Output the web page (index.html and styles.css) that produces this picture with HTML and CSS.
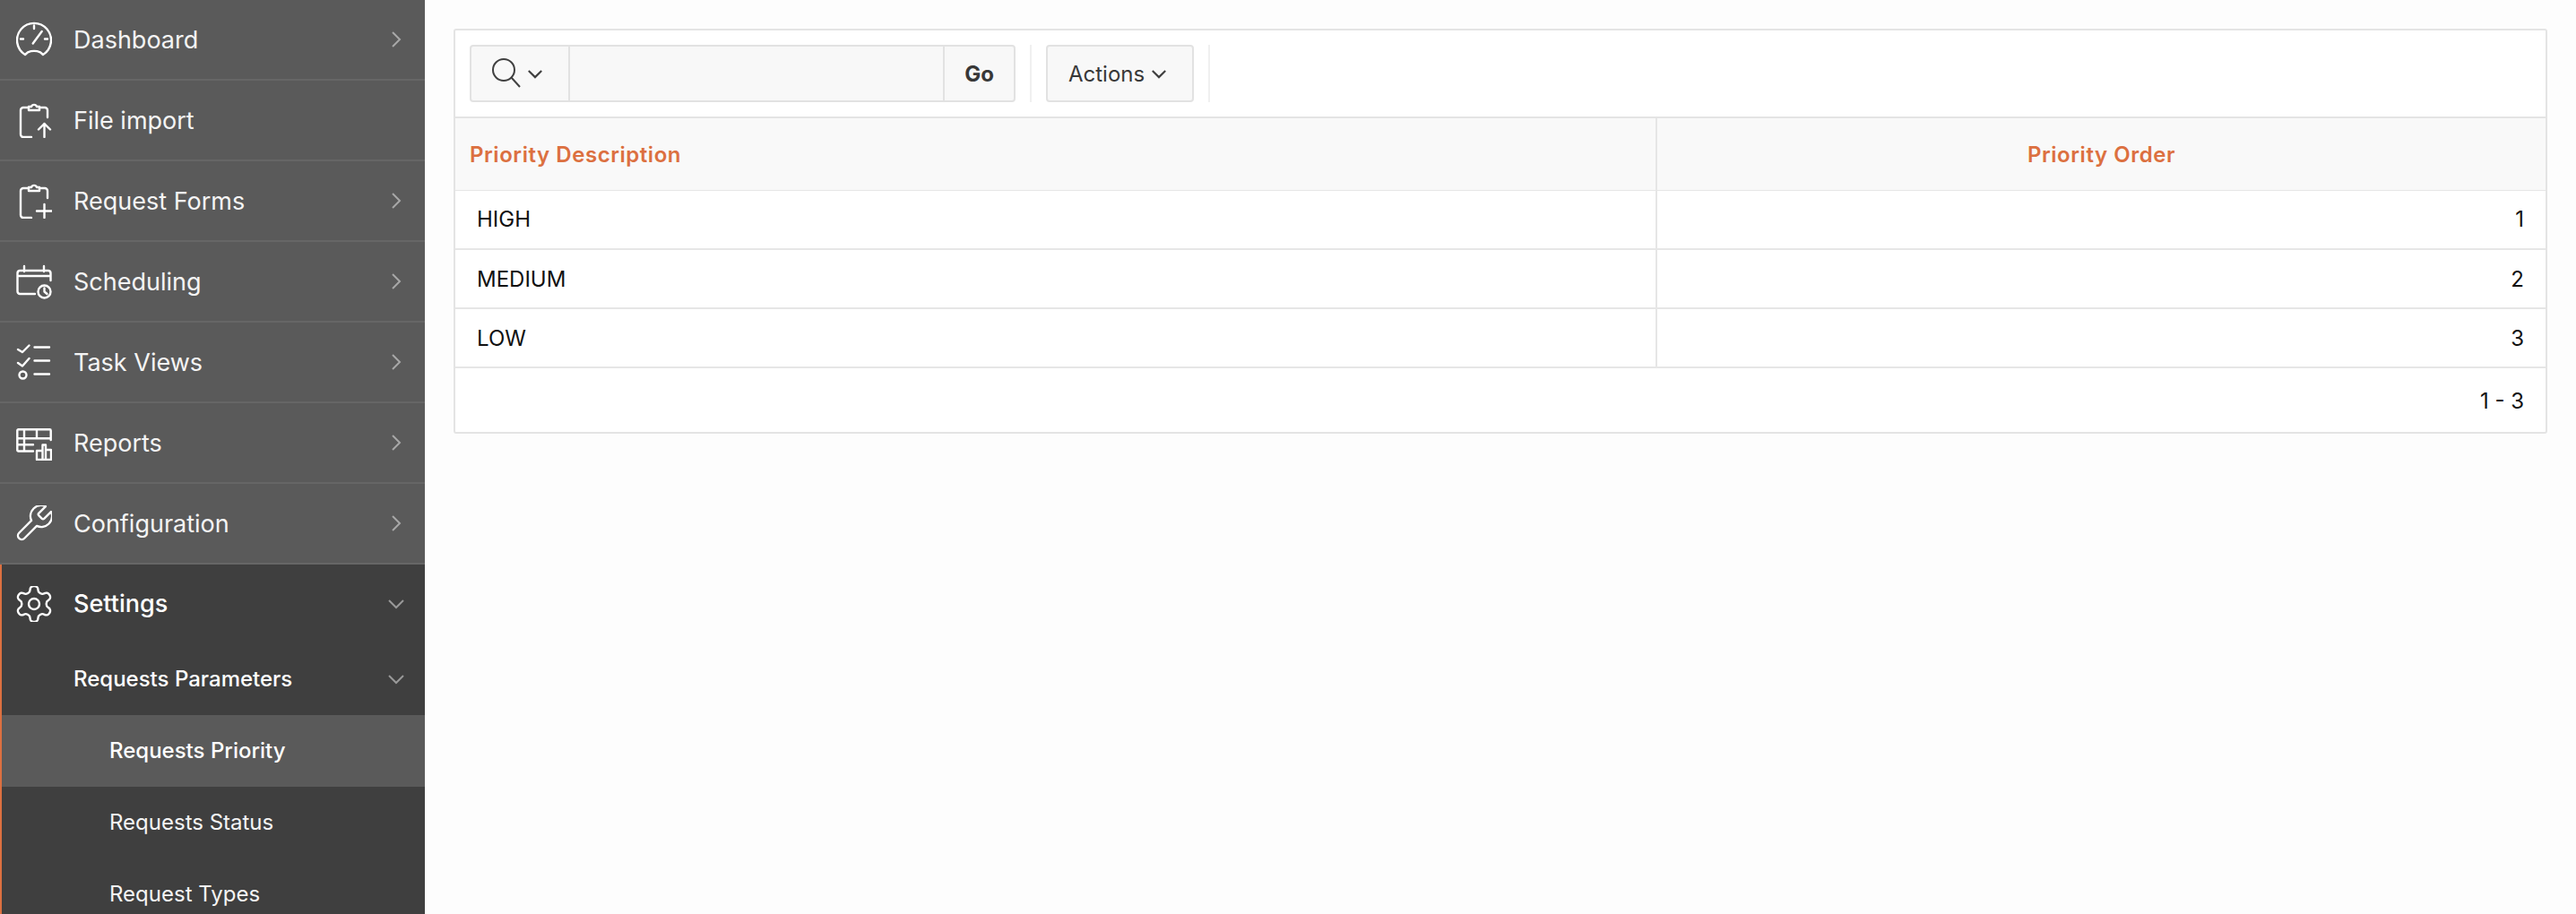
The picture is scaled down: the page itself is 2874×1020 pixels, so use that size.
FILE: index.html
```html
<!DOCTYPE html>
<html lang="en">
<head>
<meta charset="utf-8">
<title>Requests Priority</title>
<link rel="stylesheet" href="styles.css">
</head>
<body>
<div class="app">
  <nav class="side">
    <a class="item">
      <svg class="ico" viewBox="0 0 40 40"><path d="M10 37A19 19 0 1 1 30 37L27 34.3Q20 31.5 13 34.3Z"/><path d="M18.7 24.5L28.7 11M20 4.5V8M5 19.5H8M32 19.5H35"/></svg>
      <span class="label">Dashboard</span>
      <svg class="chev" viewBox="0 0 12 20"><path d="M2 2L10 10L2 18"/></svg>
    </a>
    <a class="item">
      <svg class="ico" viewBox="0 0 40 40"><path d="M13 6H8A3 3 0 0 0 5 9V36A3 3 0 0 0 8 39H17M27 6H32A3 3 0 0 1 35 9V17"/><path d="M14 9V5H17A3.2 3.2 0 0 1 23 5H26V9Z"/><path d="M31.5 39V24M25 30.5L31.5 24L38 30.5"/></svg>
      <span class="label">File import</span>
    </a>
    <a class="item">
      <svg class="ico" viewBox="0 0 40 40"><path d="M13 6H8A3 3 0 0 0 5 9V36A3 3 0 0 0 8 39H17M27 6H32A3 3 0 0 1 35 9V17"/><path d="M14 9V5H17A3.2 3.2 0 0 1 23 5H26V9Z"/><path d="M31.5 24V39M23 31.5H40"/></svg>
      <span class="label">Request Forms</span>
      <svg class="chev" viewBox="0 0 12 20"><path d="M2 2L10 10L2 18"/></svg>
    </a>
    <a class="item">
      <svg class="ico" viewBox="0 0 40 40"><path d="M21 34H4A3 3 0 0 1 1.500 31V11A3 3 0 0 1 4 8H36A3 3 0 0 1 38.500 11V19M1.500 14H38.500M9 3V9M31 3V9"/><circle cx="31.500" cy="31.500" r="7"/><path d="M31.500 27.500V31.500L34.500 34"/></svg>
      <span class="label">Scheduling</span>
      <svg class="chev" viewBox="0 0 12 20"><path d="M2 2L10 10L2 18"/></svg>
    </a>
    <a class="item">
      <svg class="ico" viewBox="0 0 40 40"><path d="M2 6L7 9L14.500 1.500M2 21L7 24.500L14.500 16M20.500 3.500H37M20.500 18.500H37M20.500 33.500H37"/><circle cx="7.500" cy="34.500" r="4"/></svg>
      <span class="label">Task Views</span>
      <svg class="chev" viewBox="0 0 12 20"><path d="M2 2L10 10L2 18"/></svg>
    </a>
    <a class="item">
      <svg class="ico" viewBox="0 0 40 40"><path d="M19 29.500H2.500A1.200 1.200 0 0 1 1.300 28.300V6.500A1.200 1.200 0 0 1 2.500 5.300H37.500A1.200 1.200 0 0 1 38.700 6.500V17M1.300 15.300H38.700M1.300 22.300H19M9 5.300V29.500M23 5.300V15.300"/><path d="M23 39V29H29.500V22.500H33V39ZM33 28H39V39H23M29.500 29V39"/></svg>
      <span class="label">Reports</span>
      <svg class="chev" viewBox="0 0 12 20"><path d="M2 2L10 10L2 18"/></svg>
    </a>
    <a class="item">
      <svg class="ico wide" viewBox="2 2 20 20"><path d="M14.700 6.300a1 1 0 0 0 0 1.400l1.600 1.600a1 1 0 0 0 1.400 0l3.770-3.770a6 6 0 0 1-7.940 7.940l-6.910 6.910a2.120 2.120 0 0 1-3-3l6.910-6.910a6 6 0 0 1 7.940-7.940l-3.760 3.760z"/></svg>
      <span class="label">Configuration</span>
      <svg class="chev" viewBox="0 0 12 20"><path d="M2 2L10 10L2 18"/></svg>
    </a>
    <div class="group">
      <a class="item open">
        <svg class="ico wide" viewBox="2 2 20 20"><path d="M12.220 2h-.44a2 2 0 0 0-2 2v.18a2 2 0 0 1-1 1.730l-.43.25a2 2 0 0 1-2 0l-.15-.08a2 2 0 0 0-2.730.73l-.22.38a2 2 0 0 0 .73 2.730l.15.1a2 2 0 0 1 1 1.720v.51a2 2 0 0 1-1 1.740l-.15.09a2 2 0 0 0-.73 2.730l.22.38a2 2 0 0 0 2.730.73l.15-.08a2 2 0 0 1 2 0l.43.25a2 2 0 0 1 1 1.730V20a2 2 0 0 0 2 2h.44a2 2 0 0 0 2-2v-.18a2 2 0 0 1 1-1.730l.43-.25a2 2 0 0 1 2 0l.15.08a2 2 0 0 0 2.730-.73l.22-.39a2 2 0 0 0-.73-2.730l-.15-.08a2 2 0 0 1-1-1.740v-.5a2 2 0 0 1 1-1.740l.15-.09a2 2 0 0 0 .73-2.730l-.22-.38a2 2 0 0 0-2.730-.73l-.15.08a2 2 0 0 1-2 0l-.43-.25a2 2 0 0 1-1-1.730V4a2 2 0 0 0-2-2z"/><circle cx="12" cy="12" r="3"/></svg>
        <span class="label">Settings</span>
        <svg class="chev down" viewBox="0 0 20 12"><path d="M2 2L10 10L18 2"/></svg>
      </a>
      <a class="sub parent"><span>Requests Parameters</span><svg class="chev down" viewBox="0 0 20 12"><path d="M2 2L10 10L18 2"/></svg></a>
      <a class="sub leaf current"><span>Requests Priority</span></a>
      <a class="sub leaf"><span>Requests Status</span></a>
      <a class="sub leaf"><span>Request Types</span></a>
    </div>
  </nav>
  <main class="main">
    <section class="card">
      <div class="toolbar">
        <div class="search">
          <div class="search-btn">
            <svg class="mag" viewBox="0 0 36 36"><circle cx="15" cy="14" r="12"/><path d="M23.500 22.500L33 33"/></svg>
            <svg class="mini" viewBox="0 0 20 12"><path d="M2 2L10 10L18 2"/></svg>
          </div>
          <div class="search-field"></div>
          <div class="go">Go</div>
        </div>
        <div class="sep"></div>
        <div class="actions">Actions<svg class="mini" viewBox="0 0 20 12"><path d="M2 2L10 10L18 2"/></svg></div>
        <div class="sep"></div>
      </div>
      <table class="grid">
        <colgroup><col class="c1"><col></colgroup>
        <thead><tr><th class="h1">Priority Description</th><th class="h2">Priority Order</th></tr></thead>
        <tbody>
          <tr><td>HIGH</td><td class="num">1</td></tr>
          <tr><td>MEDIUM</td><td class="num">2</td></tr>
          <tr><td>LOW</td><td class="num">3</td></tr>
        </tbody>
      </table>
      <div class="foot">1 - 3</div>
    </section>
  </main>
</div>
</body>
</html>
```

FILE: styles.css
```css
* { box-sizing: border-box; }
html, body { margin: 0; height: 100%; overflow: hidden; }
body { background: #fdfdfd; font-family: Inter, "Liberation Sans", sans-serif; color: #111; }
.app { display: flex; height: 1020px; }

.side { width: 474px; flex: none; height: 1020px; overflow: hidden; background: #5a5a5a; color: #fff; }
.item { display: flex; align-items: center; height: 90px; padding: 0 26px 0 18px; border-bottom: 2px solid #666; font-size: 27px; color: #f4f4f4; }
.ico { width: 40px; height: 40px; flex: none; margin-right: 24px; fill: none; stroke: #fff; stroke-width: 2.4; stroke-linecap: round; stroke-linejoin: round; }
.ico.wide { stroke-width: 1.2; }
.label { flex: 1; }
.chev { width: 12px; height: 20px; flex: none; fill: none; stroke: #a8a8a8; stroke-width: 2; }
.chev.down { width: 20px; height: 12px; margin-right: -4px; stroke: #999; }

.group { background: #3f3f3f; border-left: 2px solid #dc7040; }
.item.open { padding-left: 16px; border-bottom: 0; padding-bottom: 3px; color: #fff; font-weight: 500; }
.sub { display: flex; align-items: center; height: 80px; font-size: 24px; color: #f4f4f4; padding-bottom: 1px; }
.parent { height: 78px; padding: 0 26px 3px 80px; font-weight: 500; color: #fff; justify-content: space-between; }
.leaf { padding-left: 120px; }
.current { background: #5a5a5a; font-weight: 500; color: #fff; }

.main { flex: 1; min-width: 0; padding: 32px 32px 0; }
.card { background: #fff; border: 2px solid #e4e4e4; border-radius: 3px; height: 452px; }
.toolbar { display: flex; align-items: stretch; gap: 16px; height: 98px; padding: 16px; border-bottom: 2px solid #e4e4e4; }
.search { display: flex; width: 609px; border: 2px solid #e2e2e2; border-radius: 4px; background: #f8f8f8; }
.search-btn { display: flex; align-items: center; width: 110px; padding-left: 21px; border-right: 2px solid #e2e2e2; }
.mag { width: 36px; height: 36px; fill: none; stroke: #404040; stroke-width: 2; margin-right: 5px; }
.mini { width: 18px; height: 11px; fill: none; stroke: #404040; stroke-width: 2.4; }
.search-field { flex: 1; }
.go { display: flex; align-items: center; justify-content: center; width: 79px; border-left: 2px solid #e2e2e2; font-size: 24px; font-weight: 700; color: #383838; }
.sep { width: 2px; background: #f0f0f0; }
.actions { display: flex; align-items: center; gap: 7px; width: 165px; padding-left: 23px; border: 2px solid #e2e2e2; border-radius: 4px; background: #f8f8f8; font-size: 24px; color: #383838; }

.grid { width: 100%; border-collapse: collapse; table-layout: fixed; }
.c1 { width: 1340px; }
.grid th { height: 80px; padding: 2px 16px 0; background: #f9f9f9; border-bottom: 1px solid #e6e6e6; font-size: 24px; font-weight: 600; letter-spacing: .55px; color: #dc7040; }
.h1 { text-align: left; border-right: 2px solid #e6e6e6; }
.h2 { text-align: center; }
.grid td { height: 66px; padding: 0 24px; border-bottom: 2px solid #e6e6e6; font-size: 24px; color: #111; }
.grid td:first-child { border-right: 2px solid #e6e6e6; }
.num { text-align: right; }
.foot { display: flex; align-items: center; justify-content: flex-end; height: 72px; padding: 0 24px; font-size: 24px; color: #111; }
```
